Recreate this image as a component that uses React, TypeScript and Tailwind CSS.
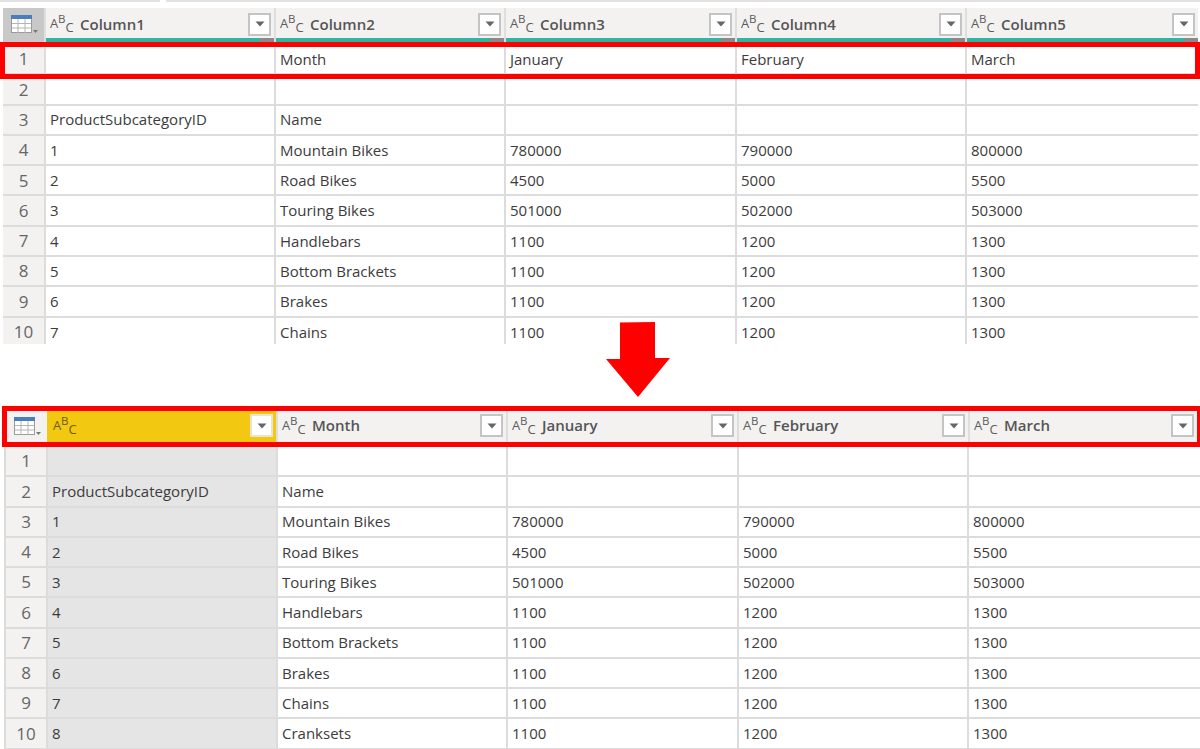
const font = "font-['Open_Sans','Noto_Sans',sans-serif]";

const body: string[][] = [
  ["", "", "", "", ""],
  ["ProductSubcategoryID", "Name", "", "", ""],
  ["1", "Mountain Bikes", "780000", "790000", "800000"],
  ["2", "Road Bikes", "4500", "5000", "5500"],
  ["3", "Touring Bikes", "501000", "502000", "503000"],
  ["4", "Handlebars", "1100", "1200", "1300"],
  ["5", "Bottom Brackets", "1100", "1200", "1300"],
  ["6", "Brakes", "1100", "1200", "1300"],
  ["7", "Chains", "1100", "1200", "1300"],
  ["8", "Cranksets", "1100", "1200", "1300"],
];
const topRows: string[][] = [["", "Month", "January", "February", "March"], ...body.slice(0, 9)];

function TableIcon() {
  return (
    <svg width="27" height="20" viewBox="0 0 27 20" fill="none">
      <rect x="0.5" y="0.5" width="20" height="17" fill="#fff" stroke="#9a9a9a" />
      <rect x="0" y="0" width="21" height="4" fill="#4a7ebb" />
      <path d="M7 4v14M14 4v14M1 8.5h19M1 13h19" stroke="#b5b5b5" />
      <path d="M22 15h5l-2.5 3z" fill="#777" />
    </svg>
  );
}

function TypeIcon({ dark }: { dark?: boolean }) {
  const c = dark ? "text-[#6b5c14]" : "text-[#5c5c5c]";
  return (
    <span className={`relative block w-[24px] h-[24px] shrink-0 text-[13px] leading-none ${c}`}>
      <span className="absolute left-0 top-[5px]">A</span>
      <span className="absolute left-[8px] top-[1px] text-[11.5px]">B</span>
      <span className="absolute left-[15.5px] top-[9px]">C</span>
    </span>
  );
}

function FilterButton({ yellow }: { yellow?: boolean }) {
  return (
    <span className={`ml-auto flex items-center justify-center w-[23px] h-[23px] shrink-0 bg-white border-2 ${yellow ? "border-[#e8e4d0]" : "border-[#c4c4c4]"}`}>
      <svg width="10" height="6" viewBox="0 0 10 6">
        <path d="M0.5 0.5h9L5 5.5z" fill="#666" />
      </svg>
    </span>
  );
}

function HeaderCell({ label, yellow, teal }: { label: string; yellow?: boolean; teal?: boolean }) {
  return (
    <div className={`relative flex items-center pr-[3px] pb-[2px] ${yellow ? "bg-[#f2c811] pl-[6px]" : "bg-[#f3f2f1] pl-[4px] border-l-2 border-[#dedede]"}`}>
      <TypeIcon dark={yellow} />
      <span className="ml-[6px] text-[15px] font-semibold text-[#555]">{label}</span>
      <FilterButton yellow={yellow} />
      {teal && (
        <span className="absolute left-0 right-0 bottom-0 h-[4px] bg-[#2fb5a0]">
          <span className="absolute right-0 top-0 bottom-0 w-[14px] bg-[#8a8a8a]" />
        </span>
      )}
    </div>
  );
}

function Row({ n, cells, shaded, cols, h }: { n: number; cells: string[]; shaded?: boolean; cols: string; h: string }) {
  return (
    <div className={`grid ${cols} ${h} border-b-2 border-[#dcdcdc] text-[15px] text-[#3c3c3c]`}>
      <div className="flex items-center justify-center bg-[#f3f2f1] text-[17px] text-[#666]">{n}</div>
      {cells.map((c, i) => (
        <div
          key={i}
          className={`flex items-center pl-[4px] border-l-2 border-[#dcdcdc] whitespace-nowrap ${shaded && i === 0 ? "bg-[#e5e5e5]" : "bg-white"}`}
        >
          {c}
        </div>
      ))}
    </div>
  );
}

export default function App() {
  const topCols = "grid-cols-[41px_230px_230px_231px_230px_1fr]";
  const botRowCols = "grid-cols-[40px_230px_230px_231px_230px_1fr]";
  const botHeadCols = "grid-cols-[40px_229px_230px_231px_231px_1fr]";
  return (
    <div className={`w-[1200px] h-[749px] overflow-hidden bg-white flex flex-col ${font}`}>
      <div className="flex gap-[6px] h-[2px] shrink-0 mb-[6px]">
        <div className="w-[160px] bg-[#e2e2e2]" />
        <div className="flex-1 bg-[#e2e2e2]" />
      </div>

      <div className="relative ml-[3px] w-[1195px] h-[336px] shrink-0 overflow-visible">
        <div className="overflow-hidden h-full">
          <div className={`grid ${topCols} h-[34px] mb-[3px]`}>
            <div className="flex items-center justify-center bg-[#c8c8c8] pl-[2px]"><TableIcon /></div>
            {["Column1", "Column2", "Column3", "Column4", "Column5"].map((c) => (
              <HeaderCell key={c} label={c} teal />
            ))}
          </div>
          {topRows.map((r, i) => (
            <Row key={i} n={i + 1} cells={r} cols={topCols} h="h-[30.3px]" />
          ))}
        </div>
        <div className="absolute left-[-3px] top-[34px] w-[1200px] h-[37px] border-[5px] border-[#ff0000] pointer-events-none" />
      </div>

      <div className="relative shrink-0 h-[62px]">
        <svg className="absolute left-[604px] top-[-23px]" width="68" height="78" viewBox="0 0 68 78">
          <path d="M16 1.5L51 1v36h15L34 76 2 38h14z" fill="#ff0000" />
        </svg>
      </div>

      <div className="ml-[2px] w-[1198px] border-[5px] border-r-[3px] border-[#ff0000] shrink-0">
        <div className={`grid ${botHeadCols} h-[31px]`}>
          <div className="flex items-center justify-center bg-[#f3f2f1]"><TableIcon /></div>
          <HeaderCell label="" yellow />
          {["Month", "January", "February", "March"].map((c) => (
            <HeaderCell key={c} label={c} />
          ))}
        </div>
      </div>

      <div className="ml-[4px] w-[1196px] border-l-2 border-[#dcdcdc]">
        {body.map((r, i) => (
          <Row key={i} n={i + 1} cells={r} shaded cols={botRowCols} h="h-[30.25px]" />
        ))}
      </div>
    </div>
  );
}
